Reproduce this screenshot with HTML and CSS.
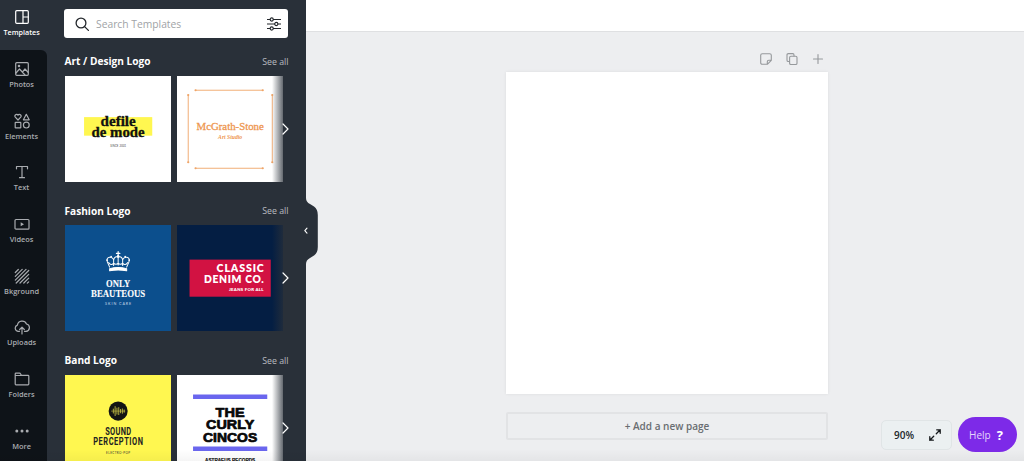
FILE: index.html
```html
<!DOCTYPE html>
<html lang="en">
<head>
<meta charset="utf-8">
<title>Logo editor</title>
<link rel="stylesheet" href="styles.css">
</head>
<body>
<div class="app">
  <nav class="rail">
    <a class="tab active"><svg viewBox="0 0 16 16"><rect x="1.7" y="1.7" width="12.6" height="12.6" rx="1"/><path d="M9 1.7v12.6M9 8h5.3"/></svg><span>Templates</span></a>
    <div class="rail-dark">
    <a class="tab"><svg viewBox="0 0 16 16"><rect x="1.7" y="1.7" width="12.6" height="12.6" rx="1"/><circle cx="5" cy="5" r=".7"/><path d="M2 12l3.500-4L11 14M8.500 11L11 8l3.300 3.500"/></svg><span>Photos</span></a>
    <a class="tab"><svg viewBox="0 0 16 16"><path d="M4 7L1.300 4.100C0 2.400 2.500.2 4 2.200 5.500.2 8 2.400 6.700 4.100zM12.300 1.300L15.200 6.800H9.400z"/><rect x="1.200" y="9.300" width="5.600" height="5.600" rx=".5"/><circle cx="12.300" cy="12.100" r="2.900"/></svg><span>Elements</span></a>
    <a class="tab"><svg viewBox="0 0 16 16"><path d="M2.500 4.800V2.500h11v2.300M8 2.500v11.200M5.500 13.700h5"/></svg><span>Text</span></a>
    <a class="tab"><svg viewBox="0 0 16 16"><rect x="1" y="3.500" width="14" height="9.700" rx="1"/><path class="solid" d="M6.700 6.300l3.300 2-3.300 2z"/></svg><span>Videos</span></a>
    <a class="tab"><svg viewBox="0 0 16 16"><path d="M1.300 4.500l3-3M1.300 8.300l6.900-6.900M1.300 12.100L12 1.400M2.200 15L14.700 2.500M6 15l8.700-8.700M9.800 15l4.900-4.900M13.300 15.200l1.400-1.400"/></svg><span>Bkground</span></a>
    <a class="tab"><svg viewBox="0 0 16 16"><path d="M5.500 12.300H4a3.200 3.200 0 0 1-.6-6.200A4.800 4.800 0 0 1 12.500 5a3.700 3.700 0 0 1-.5 7.300h-1.500M8 15V8.300M5.700 10.500L8 8.200l2.300 2.300"/></svg><span>Uploads</span></a>
    <a class="tab"><svg viewBox="0 0 16 16"><path d="M1.200 13V3q0-.8.8-.8h3.500q.7 0 1 .6l.8 1.500H14q.8 0 .8.800V13q0 .8-.8.8H2q-.8 0-.8-.8zM1.200 5.800V4.500h6"/></svg><span>Folders</span></a>
    <a class="tab"><svg viewBox="0 0 16 16"><g class="solid"><circle cx="2.800" cy="8" r="1.500"/><circle cx="8" cy="8" r="1.500"/><circle cx="13.200" cy="8" r="1.500"/></g></svg><span>More</span></a>
    </div>
  </nav>

  <aside class="panel">
    <div class="search">
      <svg class="ic-search" viewBox="0 0 14 14"><circle cx="6" cy="6" r="4.900"/><path d="M9.600 9.600l3.800 3.800"/></svg>
      <span>Search Templates</span>
      <svg class="ic-filter" viewBox="0 0 14 14"><path d="M0 2.500h3M6.400 2.500H14M0 7h7.600M11 7h3M0 11.500h3M6.400 11.500H14"/><circle cx="4.700" cy="2.500" r="1.600"/><circle cx="9.300" cy="7" r="1.600"/><circle cx="4.700" cy="11.500" r="1.600"/></svg>
    </div>

    <section class="group">
      <header><h2>Art / Design Logo</h2><a>See all</a></header>
      <div class="strip">
        <svg class="thumb" viewBox="0 0 106 106">
          <rect width="106" height="106" fill="#fff"/>
          <rect x="19" y="41" width="68" height="18.500" fill="#fff750"/>
          <g class="didone" text-anchor="middle" fill="#111" stroke="#111" stroke-width=".3">
            <text x="53" y="49.500" font-size="13.500" textLength="35" lengthAdjust="spacingAndGlyphs">defile</text>
            <text x="53" y="61" font-size="13.500" textLength="53" lengthAdjust="spacingAndGlyphs">de mode</text>
          </g>
          <text class="sans" x="53" y="70.500" font-size="2.700" text-anchor="middle" textLength="16" fill="#444">SINCE 2001</text>
        </svg>
        <svg class="thumb" viewBox="0 0 106 106">
          <rect width="106" height="106" fill="#fff"/>
          <g stroke="#efa568" stroke-width=".9" fill="#efa568">
            <path d="M18.500 14.200h67M18.500 92h67M11.200 19v67M95 19v67"/>
            <g stroke="none"><circle cx="18.500" cy="14.200" r="1.100"/><circle cx="85.500" cy="14.200" r="1.100"/><circle cx="18.500" cy="92" r="1.100"/><circle cx="85.500" cy="92" r="1.100"/><circle cx="11.200" cy="19" r="1.100"/><circle cx="11.200" cy="86" r="1.100"/><circle cx="95" cy="19" r="1.100"/><circle cx="95" cy="86" r="1.100"/></g>
          </g>
          <g class="serif" text-anchor="middle" fill="#ee9650">
            <text x="53" y="53.500" font-size="10.800" stroke="#ee9650" stroke-width=".3" textLength="67" lengthAdjust="spacingAndGlyphs">McGrath-Stone</text>
            <text x="53" y="62.500" font-size="5.300" font-style="italic" font-weight="700" textLength="24" lengthAdjust="spacingAndGlyphs">Art Studio</text>
          </g>
        </svg>
      </div>
      <svg class="next" viewBox="0 0 7 12"><path d="M1 1l5 5-5 5"/></svg>
    </section>

    <section class="group">
      <header><h2>Fashion Logo</h2><a>See all</a></header>
      <div class="strip">
        <svg class="thumb" viewBox="0 0 106 106">
          <rect width="106" height="106" fill="#0c4f8d"/>
          <g fill="none" stroke="#fff" stroke-width="1">
            <path d="M44.500 42l-2.200-5q-1.500-4 2-4.800 3-.4 4.200 2.300 1.500-4 4.500-2.500 3-1.500 4.500 2.500 1.200-2.700 4.200-2.300 3.500.8 2 4.800l-2.200 5"/>
            <path d="M53 32v8M48.500 34.500v6M57.500 34.500v6M43.500 37.500q2.500 3.500 5 .5 2.300 2.500 4.500 0 2.200 2.500 4.500 0 2.500 3 5-.5"/>
            <path d="M44.500 43.500q8.500-2.300 17 0v2.200q-8.500-1.800-17 0z" fill="#fff"/>
            <path d="M53 26.500v4.500M51.300 28.300h3.400" stroke-width="1.200"/>
          </g>
          <g fill="#fff"><circle cx="53" cy="31.300" r="1.300"/><circle cx="46" cy="31.500" r=".9"/><circle cx="60" cy="31.500" r=".9"/><circle cx="42" cy="35" r=".9"/><circle cx="64" cy="35" r=".9"/></g>
          <g class="didone" text-anchor="middle" fill="#fff" stroke="#fff" stroke-width=".1">
            <text x="53" y="61.800" font-size="9.700" textLength="24" lengthAdjust="spacingAndGlyphs">ONLY</text>
            <text x="53" y="71.500" font-size="9.700" textLength="54" lengthAdjust="spacingAndGlyphs">BEAUTEOUS</text>
          </g>
          <text class="sans" x="53" y="79.500" font-size="3.700" text-anchor="middle" textLength="26" fill="#c7d9e9">SKIN CARE</text>
        </svg>
        <svg class="thumb" viewBox="0 0 106 106">
          <rect width="106" height="106" fill="#041e43"/>
          <rect x="12.500" y="34.500" width="81" height="37" fill="#d21242"/>
          <g class="geo" text-anchor="end" fill="#fff">
            <text x="86.500" y="47.300" font-size="10.600" textLength="47">CLASSIC</text>
            <text x="86.500" y="57.800" font-size="10.300" textLength="59.500">DENIM CO.</text>
            <text x="86.300" y="65.700" font-size="4.300" textLength="34.500">JEANS FOR ALL</text>
          </g>
        </svg>
      </div>
      <svg class="next" viewBox="0 0 7 12"><path d="M1 1l5 5-5 5"/></svg>
    </section>

    <section class="group">
      <header><h2>Band Logo</h2><a>See all</a></header>
      <div class="strip">
        <svg class="thumb" viewBox="0 0 106 106">
          <rect width="106" height="106" fill="#fff750"/>
          <circle cx="53" cy="36" r="9.500" fill="#141414"/>
          <path d="M48.200 34v4M50 31.500v9M51.800 33v6M53.600 32.500v7M55.400 34.300v3.400M57.200 33.800v4.400M59 34.800v2.400" stroke="#d5cd48" stroke-width=".8"/>
          <path d="M46.300 36h13.400" stroke="#d5cd48" stroke-width=".5"/>
          <g class="condensed" text-anchor="middle" fill="#222">
            <text transform="translate(53 59.700) scale(.72 1)" font-size="10.300" textLength="36">SOUND</text>
            <text transform="translate(53 70.300) scale(.72 1)" font-size="10.300" textLength="69">PERCEPTION</text>
          </g>
          <text class="sans" x="53" y="79.200" font-size="3" text-anchor="middle" textLength="24" fill="#333">ELECTRO-POP</text>
        </svg>
        <svg class="thumb" viewBox="0 0 106 106">
          <rect width="106" height="106" fill="#fff"/>
          <path class="bars" d="M16 21.700h74M16 73.500h74" stroke="#6a66ee" stroke-width="4.500"/>
          <g class="wide" text-anchor="middle" fill="#080808">
            <text x="53" y="41.500" font-size="12.500" textLength="29" lengthAdjust="spacingAndGlyphs">THE</text>
            <text x="53" y="54" font-size="12.500" textLength="48" lengthAdjust="spacingAndGlyphs">CURLY</text>
            <text x="53" y="66.500" font-size="12.500" textLength="54" lengthAdjust="spacingAndGlyphs">CINCOS</text>
            <text class="fine" x="53" y="86.600" font-size="4.500" textLength="50" lengthAdjust="spacingAndGlyphs">ASTRAEUS RECORDS</text>
          </g>
        </svg>
      </div>
      <svg class="next" viewBox="0 0 7 12"><path d="M1 1l5 5-5 5"/></svg>
    </section>

    <svg class="collapse" viewBox="0 0 13 66"><path class="ear" d="M0 0Q0 4 4 6l4 2.500Q11.800 11 11.800 17v32q0 6-3.800 8.500L4 60q-4 2-4 6z"/><path class="chev" d="M1 30.200L-1.200 32.700l2.200 2.500"/></svg>
  </aside>

  <main class="stage">
    <div class="topbar"></div>
    <div class="workspace">
      <div class="page-tools">
        <svg viewBox="0 0 12 12"><path d="M2.300.7h7.400q1.600 0 1.600 1.600v5L7.300 11.300h-5Q.7 11.300.7 9.700V2.300Q.7.700 2.300.700zM11.300 7.300H8.800q-1.500 0-1.500 1.500v2.500"/></svg>
        <svg viewBox="0 0 12 12"><rect x="3.600" y="3.200" width="7.400" height="8.300" rx="1.300"/><path d="M3.500 8.500H2.300Q1 8.500 1 7.200V1.900Q1 .6 2.300.6h4.500Q8 .6 8 2v1"/></svg>
        <svg viewBox="0 0 12 12"><path d="M6 1.500v9M1.500 6h9"/></svg>
      </div>
      <div class="canvas"></div>
      <button class="add">+ Add a new page</button>
    </div>
    <div class="floating">
      <div class="zoom"><span>90%</span><svg viewBox="0 0 12 12"><path d="M7.300 4.700L11.200.8M7.700.8h3.500v3.500M4.700 7.300L.8 11.200M.8 7.700v3.500h3.500"/></svg></div>
      <div class="help"><span>Help</span><b>?</b></div>
    </div>
  </main>
</div>
</body>
</html>
```
FILE: styles.css
```css
* { box-sizing: border-box; }
body { margin: 0; font-family: "Open Sans", "Noto Sans", sans-serif; overflow: hidden; }
.app { position: relative; display: flex; width: 1024px; height: 461px; overflow: hidden; background: #edeef0; }
.app::after { content: ""; position: absolute; inset: auto 0 0 0; height: 12px; background: linear-gradient(rgba(0,0,0,0), rgba(0,0,0,.04)); }
svg { fill: none; stroke-linecap: round; stroke-linejoin: round; flex: none; }
.bars { stroke-linecap: butt; }

.rail { width: 47.300px; flex: none; background: #293039; }
.rail-dark { background: #0e1318; border-radius: 0 6px 0 0; height: 412px; overflow: hidden; }
.tab { display: flex; flex-direction: column; align-items: center; height: 51.700px; padding-top: 11px; padding-right: 4.200px; color: #a9acb0; font-size: 7.400px; line-height: 10px; font-weight: 600; }
.tab svg { width: 16px; height: 16px; stroke: currentColor; stroke-width: 1.200; margin-bottom: 2px; }
.tab .solid { fill: currentColor; stroke: none; }
.tab.active { height: 50px; padding-top: 9px; color: #fff; font-size: 7.200px; }

.panel { position: relative; width: 258.700px; flex: none; background: #293039; padding: 9px 17.500px 0 17.200px; }
.search { display: flex; align-items: center; height: 29px; background: #fff; border-radius: 3px; padding: 0 7.500px 0 10.500px; }
.search span { flex: 1; padding-left: 7px; font-size: 10.300px; color: #a0a3a6; }
.ic-search { width: 14px; height: 14px; stroke: #22262b; stroke-width: 1.300; }
.ic-filter { width: 14px; height: 14px; stroke: #22262b; stroke-width: 1.100; }
.group { position: relative; height: 149.500px; }
.group header { display: flex; justify-content: space-between; align-items: center; height: 37.500px; padding-top: 9px; }
.group h2 { margin: 0; font-size: 10.150px; font-weight: 700; color: #fff; }
.group a { font-size: 8.800px; color: #b9bcc0; padding-top: 1px; }
.strip { position: relative; display: flex; gap: 5.700px; width: 218.300px; margin-left: .5px; overflow: hidden; }
.strip::after { content: ""; position: absolute; inset: 0 0 0 auto; width: 11px; background: linear-gradient(90deg, rgba(41,48,57,0), rgba(41,48,57,.72)); }
.thumb { width: 106.300px; height: 106.300px; display: block; }
.next { position: absolute; left: 218px; top: 84.500px; width: 7px; height: 12px; stroke: #fff; stroke-width: 1.200; }
.collapse { position: absolute; left: 258.700px; top: 198px; width: 13px; height: 66px; overflow: visible; }
.ear { fill: #293039; }
.chev { stroke: #fff; stroke-width: 1.100; }

.didone { font-family: "Liberation Serif", serif; font-weight: 700; }
.serif { font-family: "Liberation Serif", serif; }
.sans { font-family: Lato, sans-serif; }
.geo { font-family: Lato, sans-serif; font-weight: 800; }
.condensed { font-family: Roboto, sans-serif; font-weight: 700; }
.wide { font-family: "Liberation Sans", sans-serif; font-weight: 700; stroke: #080808; stroke-width: .7; }
.fine { stroke-width: .15; }

.stage { position: relative; flex: 1; display: flex; flex-direction: column; }
.topbar { height: 32px; flex: none; background: #fff; border-bottom: 1px solid #dfe0e2; }
.workspace { width: 322px; margin-left: 200px; flex: 1; display: flex; flex-direction: column; }
.page-tools { display: flex; justify-content: flex-end; gap: 14px; padding: 21px 4px 0 0; height: 40px; }
.page-tools svg { width: 12px; height: 12px; stroke: #96999c; stroke-width: 1.100; }
.canvas { height: 321.500px; flex: none; background: #fff; box-shadow: 0 0 3px rgba(20,25,30,.08); }
.add { margin: 18px 0 0; height: 28.500px; flex: none; border: 2px solid #e2e3e5; border-radius: 2px; background: transparent; font: 600 10px "Open Sans", sans-serif; color: #696d71; padding: 0; }
.floating { position: absolute; right: 7px; bottom: 9px; display: flex; align-items: center; gap: 6px; }
.zoom { display: flex; align-items: center; justify-content: space-between; width: 71px; height: 30px; padding: 1px 10px 0 12px; background: #ebf0f1; border: 1px solid #e0e5e6; border-radius: 5px; font-size: 10px; font-weight: 600; color: #22272b; }
.zoom svg { width: 12px; height: 12px; stroke: #14181b; stroke-width: 1.300; }
.help { display: flex; align-items: center; justify-content: center; gap: 6px; width: 59px; height: 35px; padding-right: 3px; border-radius: 18px; background: #7d2ae8; color: #e6d6fb; font-size: 10px; }
.help b { font-size: 13px; color: #fff; }
```
